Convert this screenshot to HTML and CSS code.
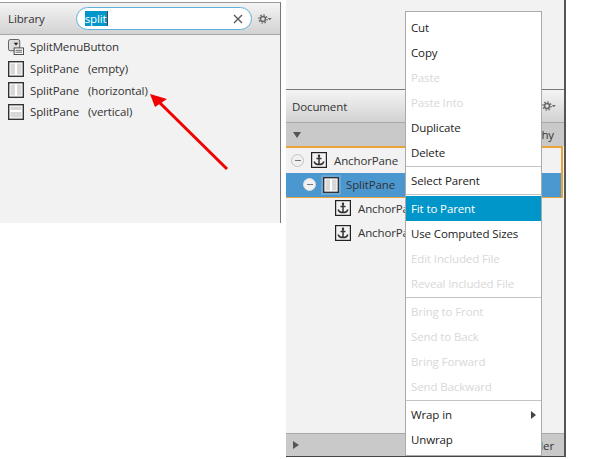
FILE: index.html
```html
<!DOCTYPE html>
<html lang="en">
    <head>
        <meta charset="UTF-8" />
        <title>Scene Builder</title>
        <link rel="stylesheet" href="styles.css">
    </head>
    <body>
        <svg width="0" height="0" class="defs">
            <symbol id="anchor" viewBox="0 0 16 16">
                <rect x="0.6" y="0.6" width="14.800" height="14.800" fill="#f2f2f2" stroke="#222" stroke-width="1.200"/>
                <circle cx="8" cy="3.700" r="1.200" fill="#333"/>
                <path d="M8 4v8.500M5.500 6.500h5M3.200 9.500c.5 2.500 2.800 3 4.800 3s4.300-.5 4.800-3" fill="none" stroke="#333" stroke-width="1.500"/>
            </symbol>
            <symbol id="split-h" viewBox="0 0 16 16">
                <rect x="0.7" y="0.7" width="14.600" height="14.600" fill="#fff" stroke="#333" stroke-width="1.400"/>
                <rect x="2.500" y="2.500" width="4.500" height="11" fill="#d8d8d8"/>
                <rect x="9" y="2.500" width="4.500" height="11" fill="#d8d8d8"/>
            </symbol>
            <symbol id="split-v" viewBox="0 0 16 16">
                <rect x="0.7" y="0.7" width="14.600" height="14.600" fill="#fff" stroke="#333" stroke-width="1.400"/>
                <rect x="2.500" y="2.500" width="11" height="3.500" fill="#d8d8d8"/>
                <rect x="2.500" y="8" width="11" height="5.500" fill="#d8d8d8"/>
            </symbol>
            <symbol id="menu-button" viewBox="0 0 17 17">
                <rect x="0.5" y="0.5" width="12" height="12" rx="2" fill="#ddd" stroke="#555"/>
                <path d="M6 4h5l-2.500 3z" fill="#222"/>
                <rect x="6.500" y="9.500" width="10" height="7" fill="#fff" stroke="#444"/>
                <path d="M8 12h7M8 14h7" stroke="#555"/>
            </symbol>
            <symbol id="gear" viewBox="0 0 14 10">
                <circle cx="5" cy="5" r="2.500" fill="none" stroke="#666" stroke-width="1.500"/>
                <circle cx="5" cy="5" r="4.100" fill="none" stroke="#666" stroke-width="1.300" stroke-dasharray="1.500 1.700"/>
                <path d="M9.800 4h4l-2 2.300z" fill="#666"/>
            </symbol>
        </svg>

        <div class="window library">
            <div class="panel-header">
                <span class="panel-title">Library</span>
                <div class="search">
                    <span class="search-text">split</span>
                    <svg class="search-clear" width="10" height="10" viewBox="0 0 10 10"><path d="M1 1l8 8M9 1l-8 8" stroke="#555" stroke-width="1.300"/></svg>
                </div>
                <svg class="gear" width="14" height="10"><use href="#gear"/></svg>
            </div>
            <ul class="lib-list">
                <li><svg class="lib-icon" width="16" height="16"><use href="#menu-button"/></svg>SplitMenuButton</li>
                <li><svg class="lib-icon" width="16" height="16"><use href="#split-h"/></svg>SplitPane<span class="qualifier">(empty)</span></li>
                <li><svg class="lib-icon" width="16" height="16"><use href="#split-h"/></svg>SplitPane<span class="qualifier">(horizontal)</span></li>
                <li><svg class="lib-icon" width="16" height="16"><use href="#split-v"/></svg>SplitPane<span class="qualifier">(vertical)</span></li>
            </ul>
        </div>

        <div class="window document">
            <div class="doc-top"></div>
            <div class="panel-header doc-header">
                <span class="panel-title">Document</span>
                <svg class="gear" width="14" height="10"><use href="#gear"/></svg>
            </div>
            <div class="doc-section">
                <span class="arrow-down"></span>
                <span class="section-label">Hierarchy</span>
            </div>
            <div class="tree">
                <div class="drop-frame">
                    <div class="tree-row depth-0">
                        <span class="toggle"></span>
                        <svg class="tree-icon" width="16" height="16"><use href="#anchor"/></svg>
                        <span>AnchorPane</span>
                    </div>
                    <div class="tree-row depth-1 selected">
                        <span class="toggle"></span>
                        <svg class="tree-icon" width="16" height="16"><use href="#split-h"/></svg>
                        <span>SplitPane</span>
                    </div>
                </div>
                <div class="tree-row depth-2">
                    <svg class="tree-icon" width="16" height="16"><use href="#anchor"/></svg>
                    <span>AnchorPane</span>
                </div>
                <div class="tree-row depth-2">
                    <svg class="tree-icon" width="16" height="16"><use href="#anchor"/></svg>
                    <span>AnchorPane</span>
                </div>
            </div>
            <div class="doc-section doc-footer">
                <span class="arrow-right"></span>
                <span class="section-label">Controller</span>
            </div>
        </div>

        <div class="context-menu">
            <div class="menu-item">Cut</div>
            <div class="menu-item">Copy</div>
            <div class="menu-item disabled">Paste</div>
            <div class="menu-item disabled">Paste Into</div>
            <div class="menu-item">Duplicate</div>
            <div class="menu-item">Delete</div>
            <div class="menu-sep"></div>
            <div class="menu-item">Select Parent</div>
            <div class="menu-sep"></div>
            <div class="menu-item active">Fit to Parent</div>
            <div class="menu-item">Use Computed Sizes</div>
            <div class="menu-item disabled">Edit Included File</div>
            <div class="menu-item disabled">Reveal Included File</div>
            <div class="menu-sep"></div>
            <div class="menu-item disabled">Bring to Front</div>
            <div class="menu-item disabled">Send to Back</div>
            <div class="menu-item disabled">Bring Forward</div>
            <div class="menu-item disabled">Send Backward</div>
            <div class="menu-sep"></div>
            <div class="menu-item has-sub">Wrap in<span class="arrow-sub"></span></div>
            <div class="menu-item">Unwrap</div>
        </div>

        <svg class="callout" width="90" height="84" viewBox="0 0 90 84">
            <path d="M78 75L11 9" stroke="#f00000" stroke-width="3" fill="none"/>
            <path d="M1 0L18 5L6 13z" fill="#f00000"/>
        </svg>
    </body>
</html>
```

FILE: styles.css
```css
* {
    box-sizing: border-box;
}
html, body {
    margin: 0;
    height: 100%;
    overflow: hidden;
}
body {
    position: relative;
    background: #fff;
    font-family: "Open Sans", sans-serif;
    font-size: 11.5px;
    letter-spacing: -0.12px;
    color: #333;
}
.defs {
    position: absolute;
}
.window {
    position: absolute;
    background: #f2f2f2;
}
.library {
    left: 0;
    top: 2px;
    width: 281px;
    height: 221px;
    border-top: 1px solid #999;
    border-right: 1px solid #777;
}
.panel-header {
    display: flex;
    align-items: center;
    height: 32px;
    padding: 0 8px;
    background: linear-gradient(#f4f4f4, #d2d2d2);
    border-bottom: 1px solid #a8a8a8;
}
.panel-title {
    width: 68px;
}
.search {
    display: flex;
    align-items: center;
    justify-content: space-between;
    width: 177px;
    height: 23px;
    padding: 0 8px;
    background: #fff;
    border: 1.5px solid #5fb0da;
    border-radius: 12px;
}
.search-text {
    background: #0096c9;
    border-right: 1.5px solid #444;
    color: #fff;
    line-height: 15px;
}
.gear {
    margin-left: 6px;
}
.lib-list {
    list-style: none;
    margin: 0;
    padding: 1px 0 0 8px;
}
.lib-list li {
    display: flex;
    align-items: center;
    height: 21.7px;
}
.lib-icon {
    margin-right: 6px;
    flex: none;
}
.qualifier {
    margin-left: 9px;
}

.document {
    left: 286px;
    top: 0;
    width: 280px;
    height: 457px;
    display: flex;
    flex-direction: column;
    border-right: 2px solid #555;
    border-bottom: 1px solid #444;
}
.doc-top {
    height: 90px;
    flex: none;
    border-bottom: 1px solid #777;
}
.doc-header {
    flex: none;
    height: 33px;
    padding: 0 8px 0 6px;
    justify-content: space-between;
}
.doc-section {
    display: flex;
    align-items: center;
    justify-content: space-between;
    flex: none;
    height: 23px;
    padding: 0 10px 0 7px;
    background: #c9c9c9;
}
.tree {
    flex: 1;
    background: #f2f2f2;
}
/* the orange frame sits a little over the row below it */
.drop-frame {
    position: relative;
    z-index: 1;
    border: 2px solid #e8a33a;
    border-left: none;
    height: 52px;
    margin: 0 1px -2px 0;
}
.tree-row {
    display: flex;
    align-items: center;
    height: 24.5px;
}
.depth-0 {
    padding-left: 5px;
}
.depth-1 {
    padding-left: 17px;
    height: 24px;
}
.depth-2 {
    padding-left: 49px;
}
.selected {
    background: #4b97d0;
    color: #333;
}
.selected .tree-icon {
    outline: 2px solid #6aa8d8;
}
.toggle {
    position: relative;
    width: 13px;
    height: 13px;
    margin-right: 7px;
    border-radius: 50%;
    background: #f0f0f0;
    border: 1px solid #c4c4c4;
}
.selected .toggle {
    background: #f2f2f2;
    border-color: #dcdcdc;
}
.toggle::after {
    content: "";
    position: absolute;
    left: 2.500px;
    top: 5px;
    width: 6px;
    height: 1px;
    background: #777;
}
.tree-icon {
    margin-right: 7px;
    flex: none;
}
.arrow-down {
    border: 4px solid transparent;
    border-top: 6px solid #555;
    border-bottom: none;
}
.arrow-right {
    border: 4px solid transparent;
    border-left: 6px solid #555;
    border-right: none;
}
.doc-footer {
    border-top: 1px solid #aaa;
}

.context-menu {
    position: absolute;
    z-index: 2;
    left: 405px;
    top: 11px;
    width: 137px;
    height: 445px;
    padding: 3px 0;
    background: #fff;
    border: 1px solid #aaa;
    color: #222;
}
.menu-item {
    display: flex;
    align-items: center;
    justify-content: space-between;
    height: 25px;
    padding: 0 5px;
}
.menu-item.disabled {
    color: #d8d8d8;
}
.menu-item.active {
    background: #0096c9;
    color: #fff;
}
.menu-sep {
    height: 3px;
    padding-top: 1px;
}
.menu-sep::before {
    content: "";
    display: block;
    height: 1px;
    background: #c4c4c4;
}
.arrow-sub {
    border: 4px solid transparent;
    border-left: 5px solid #444;
    border-right: none;
}
.callout {
    position: absolute;
    left: 149px;
    top: 94px;
}
```
